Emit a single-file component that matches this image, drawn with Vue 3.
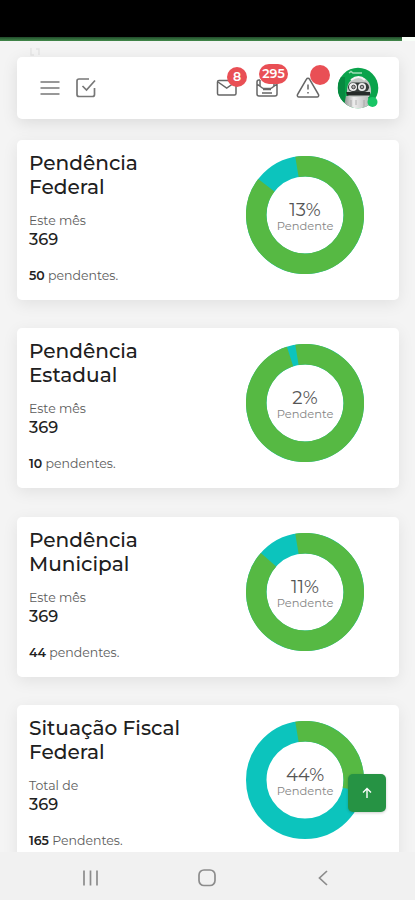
<script setup>
const cards = [
  { title: ['Pendência', 'Federal'], label: 'Este mês', total: 369, count: 50, note: 'pendentes.', percent: 13, green: 316.5 },
  { title: ['Pendência', 'Estadual'], label: 'Este mês', total: 369, count: 10, note: 'pendentes.', percent: 2, green: 351 },
  { title: ['Pendência', 'Municipal'], label: 'Este mês', total: 369, count: 44, note: 'pendentes.', percent: 11, green: 320.5 },
  { title: ['Situação Fiscal', 'Federal'], label: 'Total de', total: 369, count: 165, note: 'Pendentes.', percent: 44, green: 111 },
]
const length = 2 * Math.PI * 48.75
const dash = (degrees) => `${(degrees / 360) * length} ${length}`
</script>

<template>
  <div class="screen">
    <div class="status"></div>
    <div class="progress"><div class="progress-fill"></div></div>
    <main class="content">
      <svg class="trace" width="12" height="10" viewBox="0 0 12 10"><path d="M2 1v7h3M7 2h3v6" /></svg>
      <header class="toolbar">
        <svg class="menu" width="20" height="18" viewBox="0 0 20 18"><path d="M.5 3h19M.5 9h19M.5 15h19" /></svg>
        <svg class="check" width="22" height="22" viewBox="0 0 22 22"><path d="M14 2H4a2 2 0 0 0-2 2v13.500a2 2 0 0 0 2 2h13.500a2 2 0 0 0 2-2V11M7.500 9l4 4L20 3.500" /></svg>
        <div class="tool mail">
          <svg width="22" height="18" viewBox="0 0 22 18"><rect x="1.500" y="1.500" width="18.500" height="14.500" rx="1.500" /><path d="m2 3 8.700 6L19.500 3" /></svg>
          <span class="badge">8</span>
        </div>
        <div class="tool inbox">
          <svg width="24" height="20" viewBox="0 0 24 20"><path d="M5 2H4a2 2 0 0 0-2 2v12a2 2 0 0 0 2 2h16a2 2 0 0 0 2-2V4a2 2 0 0 0-2-2M2 6l6 4.500M22 6l-6 4.500M7 15h10" /><path d="M8 11h8" stroke-width="2.500" /><path d="M5 2v6M19 2v6" /></svg>
          <span class="badge wide">295</span>
        </div>
        <div class="tool warning">
          <svg width="24" height="22" viewBox="0 0 24 22"><path d="M10.500 2.200 1.700 17.200A1.700 1.700 0 0 0 3.200 20h17.600a1.700 1.700 0 0 0 1.500-2.800L13.500 2.200a1.700 1.700 0 0 0-3 0ZM12 7.500v5M12 15v1.500" /></svg>
          <span class="badge empty"></span>
        </div>
        <svg class="avatar" width="44" height="46" viewBox="0 0 44 46">
          <defs>
            <clipPath id="avatar-clip"><circle cx="21" cy="21" r="20.300" /></clipPath>
            <linearGradient id="body" x2="1"><stop stop-color="#858585" /><stop offset=".4" stop-color="#eee" /><stop offset="1" stop-color="#b5b5b5" /></linearGradient>
          </defs>
          <g clip-path="url(#avatar-clip)">
            <rect width="44" height="44" fill="#0aa34b" />
            <path d="M1 10h7v25H1z" fill="#078a40" />
            <path d="m12 6 2-1.500L16 6h9" fill="none" stroke="#9dddb7" stroke-width="1.500" />
            <path d="M9 29h22l2 15H6z" fill="url(#body)" />
            <path d="M14 33v8M19 33v5M27 33v7" fill="none" stroke="#999" stroke-width=".7" />
            <path d="M10 25c-1-20 25-20 24 0l-2 5H12z" fill="#c3c8c5" />
            <path d="M14 13q8-6 14 0" fill="none" stroke="#f4f4f4" stroke-width="2" />
            <path d="M9 25h24v3.500H10z" fill="#262b29" />
            <rect x="11" y="15.500" width="21" height="9.500" rx="4.700" fill="#353b39" />
            <circle cx="16" cy="20" r="4" fill="#eee" /><circle cx="25" cy="20" r="4" fill="#eee" />
            <circle cx="16.500" cy="20" r="1.800" fill="#aaa" stroke="#444" stroke-width="1" />
            <circle cx="25" cy="20" r="1.800" fill="#aaa" stroke="#444" stroke-width="1" />
          </g>
          <circle cx="35.500" cy="35" r="5" fill="#18c565" />
        </svg>
      </header>

      <section v-for="(card, i) in cards" :key="i" class="card">
        <div class="details">
          <h2><span v-for="line in card.title" :key="line">{{ line }}</span></h2>
          <div class="label">{{ card.label }}</div>
          <div class="total">{{ card.total }}</div>
          <div class="note"><b>{{ card.count }}</b> {{ card.note }}</div>
        </div>
        <div class="chart">
          <svg width="118" height="118" viewBox="0 0 118 118">
            <circle cx="59" cy="59" r="48.750" stroke="#0cc4bd" />
            <circle cx="59" cy="59" r="48.750" stroke="#56b943" :stroke-dasharray="dash(card.green)" transform="rotate(-99.500 59 59)" />
          </svg>
          <div class="chart-text"><div class="percent">{{ card.percent }}%</div><div class="pending">Pendente</div></div>
        </div>
      </section>
    </main>
    <button class="to-top" aria-label="Topo"><svg width="14" height="14" viewBox="0 0 14 14"><path d="M7 12V2.500M3 6.500l4-4 4 4" /></svg></button>
    <nav class="navigation">
      <svg width="18" height="18" viewBox="0 0 18 18"><path d="M2 1.500v15M8.500 1.500v15M15 1.500v15" /></svg>
      <svg width="20" height="20" viewBox="0 0 20 20"><rect x="2" y="2" width="16" height="15.500" rx="5" /></svg>
      <svg width="18" height="18" viewBox="0 0 18 18"><path d="M13 2 5.500 9l7.500 7" /></svg>
    </nav>
  </div>
</template>

<style>
body { margin: 0; overflow: hidden; }
</style>

<style scoped>
* { box-sizing: border-box; }
.screen { position: relative; width: 415px; height: 900px; display: flex; flex-direction: column; background: #f4f4f4; font-family: Montserrat, Inter, sans-serif; overflow: hidden; }
.status { height: 37px; flex: none; background: #000; }
.progress { height: 4px; flex: none; background: #f8fff8; }
.progress-fill { width: 402px; height: 4px; background: linear-gradient(#20492a, #438b4b); }
.content { flex: 1; min-height: 0; overflow: hidden; padding: 6px 16px 0 17px; display: flex; flex-direction: column; }
.trace { flex: none; margin-left: 12px; fill: none; stroke: #e5e5e5; stroke-width: 1.4; }
.toolbar { height: 62px; flex: none; margin-bottom: 21px; padding: 0 21px 0 23px; display: flex; align-items: center; background: #fff; border-radius: 5px; box-shadow: 0 4px 16px #0000001a; }
.toolbar svg { fill: none; stroke: #777; stroke-width: 1.7; flex: none; }
.menu { margin-right: 16px; }
.toolbar .check { margin-left: -1px; }
.tool { position: relative; display: flex; }
.toolbar .tool svg { stroke: #666; stroke-width: 1.5; }
.mail { margin-left: auto; margin-right: 17px; }
.inbox { margin-right: 17px; }
.warning { margin-right: 17px; }
.toolbar .avatar { stroke: none; margin-top: 3px; margin-right: -3px; }
.badge { position: absolute; left: 11px; top: -12px; height: 20px; width: 20px; border-radius: 10px; background: #e94f55; color: #fff; font-size: 12.5px; line-height: 20px; font-weight: 600; text-align: center; }
.badge.wide { left: 4px; top: -14px; width: 29px; }
.badge.empty { left: 14px; top: -12px; }
.card { height: 160px; flex: none; margin-bottom: 28.4px; padding: 11px 35px 0 12px; display: flex; justify-content: space-between; background: #fff; border-radius: 5px; box-shadow: 0 4px 16px #00000014; }
.details { color: #202020; }
h2 { margin: 0; display: flex; flex-direction: column; font-size: 20.1px; line-height: 24px; font-weight: 500; white-space: nowrap; }
.label { margin-top: 14px; font-size: 12.5px; line-height: 16px; color: #5c5c5c; }
.total { font-size: 16.2px; line-height: 21px; font-weight: 500; }
.note { margin-top: 18px; font-size: 12.5px; line-height: 16px; color: #5c5c5c; white-space: nowrap; }
.note b { font-weight: 600; color: #222; }
.chart { display: grid; width: 118px; height: 118px; margin-top: 5px; }
.chart > * { grid-area: 1 / 1; }
.chart circle { fill: none; stroke-width: 20.5; }
.chart-text { place-self: center; padding-top: 5px; text-align: center; }
.percent { font-size: 18px; line-height: 18px; color: #555; }
.pending { font-size: 11.5px; line-height: 15px; color: #858585; }
.to-top { position: absolute; left: 348px; top: 774px; width: 38px; height: 38px; padding: 0; border: 0; border-radius: 5px; display: grid; place-items: center; background: #269344; box-shadow: 0 1px 3px #0003; }
.to-top svg { fill: none; stroke: #fff; stroke-width: 1.4; }
.navigation { height: 48px; flex: none; padding: 3px 83px 0 82px; display: flex; justify-content: space-between; align-items: center; background: #f1f1f1; z-index: 1; }
.navigation svg { fill: none; stroke: #8c8c8c; stroke-width: 1.7; }
</style>
